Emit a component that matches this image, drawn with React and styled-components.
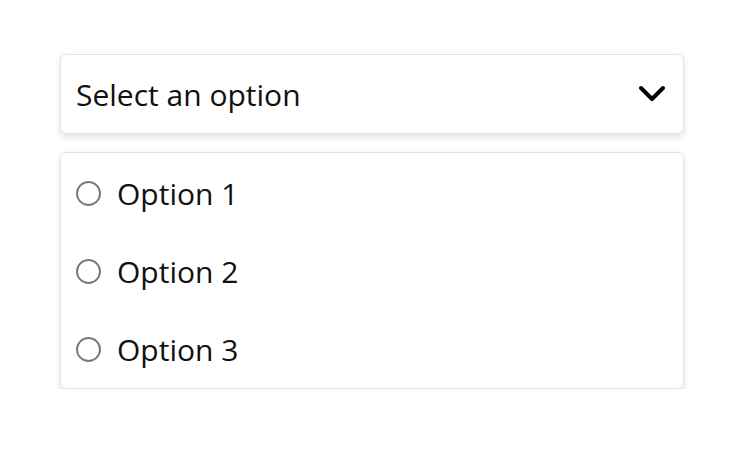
import React, { useState } from "react";
import styled, { createGlobalStyle } from "styled-components";

const Global = createGlobalStyle`
  html, body { margin: 0; padding: 0; background: #ffffff; }
  body { font-family: "Segoe UI", "Open Sans", "Noto Sans", sans-serif; color: #111; }
`;

const Page = styled.div`
  padding: 54px 66px 0 60px;
  display: flex;
  flex-direction: column;
  gap: 18px;
  width: 624px;
`;

const Trigger = styled.button`
  display: flex;
  align-items: center;
  justify-content: space-between;
  height: 80px;
  box-sizing: border-box;
  padding: 0 17px 0 15px;
  background: #fff;
  border: 1px solid #e4e4e4;
  border-radius: 6px;
  box-shadow: 0 3px 7px rgba(0, 0, 0, 0.12);
  font-family: inherit;
  font-size: 30px;
  color: #111;
  cursor: pointer;
  text-align: left;
`;

const Menu = styled.div`
  display: flex;
  flex-direction: column;
  padding-top: 1px;
  background: #fff;
  border: 1px solid #e4e4e4;
  border-radius: 6px;
  box-shadow: 0 3px 7px rgba(0, 0, 0, 0.12);
`;

const Row = styled.label`
  display: flex;
  align-items: center;
  gap: 16px;
  height: 78px;
  padding: 0 16px 0 15px;
  font-size: 30px;
  cursor: pointer;
`;

const Radio = styled.span`
  width: 25px;
  height: 25px;
  box-sizing: border-box;
  border-radius: 50%;
  border: 2px solid ${(p) => (p.$checked ? "#0060df" : "#7a7a7a")};
  flex: none;
`;

const Chevron = () => (
  <svg width="28" height="18" viewBox="0 0 28 18" fill="none">
    <path d="M3 3 L14 14 L25 3" stroke="#000" strokeWidth="4" strokeLinecap="round" strokeLinejoin="round" />
  </svg>
);

export default function App() {
  const [sel, setSel] = useState(null);
  const opts = ["Option 1", "Option 2", "Option 3"];
  return (
    <>
      <Global />
      <Page>
        <Trigger>
          <span>{sel ?? "Select an option"}</span>
          <Chevron />
        </Trigger>
        <Menu>
          {opts.map((o) => (
            <Row key={o} onClick={() => setSel(o)}>
              <Radio $checked={sel === o} />
              {o}
            </Row>
          ))}
        </Menu>
      </Page>
    </>
  );
}
